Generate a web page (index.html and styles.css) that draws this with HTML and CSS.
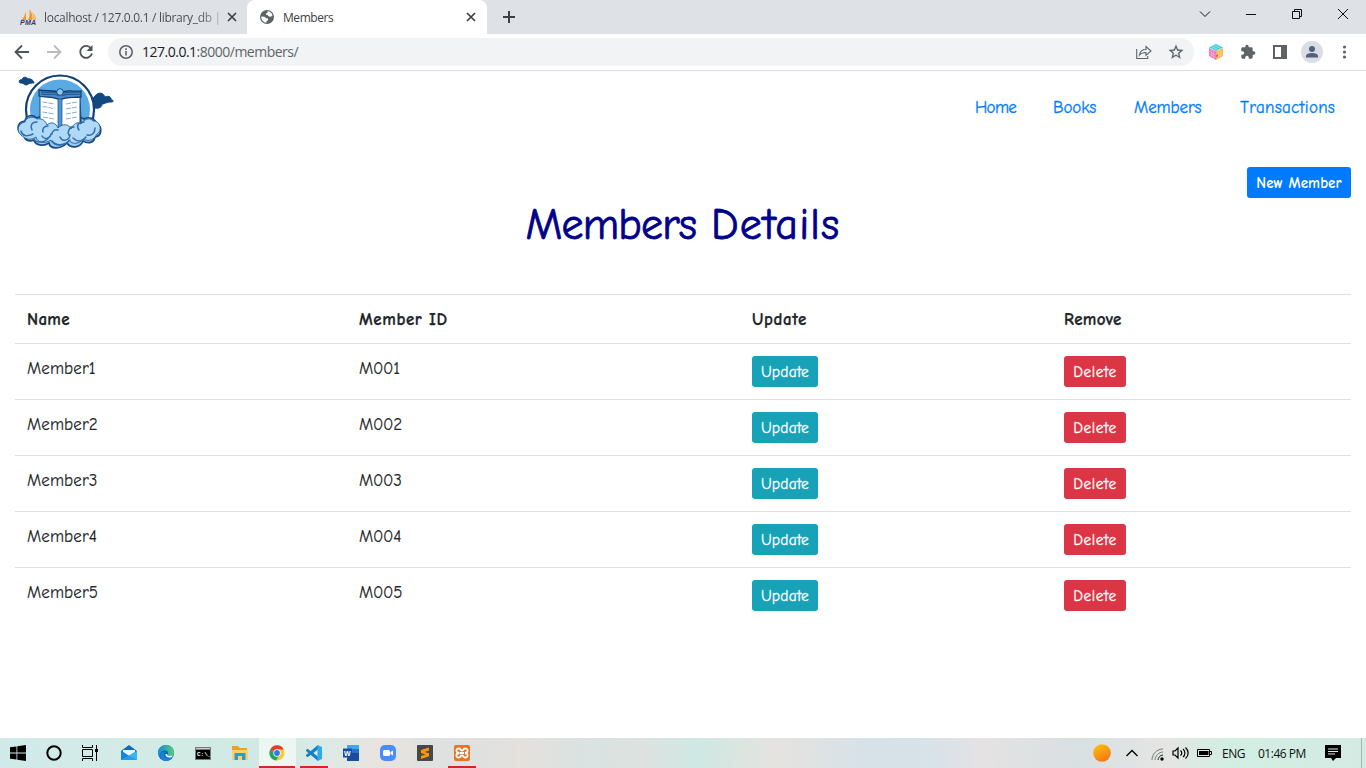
FILE: index.html
```html
<!DOCTYPE html>
<html lang="en">
<head>
<meta charset="utf-8">
<title>Members</title>
<link rel="stylesheet" href="styles.css">
</head>
<body>
<div class="screen">
  <header class="tabs">
    <div class="tab">
      <svg class="pma" width="17" height="17" viewBox="0 0 17 17"><path d="M6 2v9H1C4 9 5 6 6 2zM9 0c3 3 4 7 3 11H8c2-4 2-8 1-11z" fill="#f79428"/><path d="M12 3c3 2 4 5 4 8h-4c1-3 1-5 0-8z" fill="#f9b868"/><text x="0" y="16" textLength="16" class="pma-text">PMA</text></svg>
      <span class="tab-title first">localhost / 127.0.0.1 / library_db |</span>
      <svg class="close" width="10" height="10" viewBox="0 0 10 10"><path d="M1 1l8 8M9 1L1 9"/></svg>
    </div>
    <div class="tab active">
      <svg class="globe" width="14" height="14" viewBox="0 0 14 14"><circle cx="7" cy="7" r="7" fill="#5f6368"/><path d="M1.300 6.500l3.200.2 1.700 1.500 1.800.3v1.700L6.500 11v1.700C3.500 12.500 1.200 10 1.300 6.500zM7.500 1.300c2.500 0 4.500 1.700 5 4l-1.500 1.500-2-.2-1.500-1.500-1.500-.3V3.500l1.500-.7z" fill="#fff"/></svg>
      <span class="tab-title">Members</span>
      <svg class="close" width="10" height="10" viewBox="0 0 10 10"><path d="M1 1l8 8M9 1L1 9"/></svg>
    </div>
    <svg class="plus" width="12" height="12" viewBox="0 0 12 12"><path d="M6 0v12M0 6h12"/></svg>
    <div class="window-controls">
      <svg width="12" height="12" viewBox="0 0 12 12"><path d="M1 3.500l5 5 5-5"/></svg>
      <svg width="12" height="12" viewBox="0 0 12 12"><path d="M1 6.500h10"/></svg>
      <svg width="12" height="12" viewBox="0 0 12 12"><path d="M1.500 3.500h7v7h-7zM3.500 3V1.500h7v7H9"/></svg>
      <svg width="12" height="12" viewBox="0 0 12 12"><path d="M1 1l10 10M11 1L1 11"/></svg>
    </div>
  </header>

  <div class="toolbar">
    <svg class="nav-icon" width="16" height="16" viewBox="0 0 16 16"><path d="M15 8H2M8 1.500L1.500 8 8 14.500"/></svg>
    <svg class="nav-icon off" width="16" height="16" viewBox="0 0 16 16"><path d="M1 8h13M8 1.500L14.500 8 8 14.500"/></svg>
    <svg class="nav-icon" width="16" height="16" viewBox="0 0 16 16"><path d="M13.200 4.500A6 6 0 1 0 14 9.500"/><path d="M14.500 1v6h-6z" class="solid"/></svg>
    <div class="address">
      <svg width="14" height="14" viewBox="0 0 14 14"><circle cx="7" cy="7" r="6.200" class="line"/><path d="M7 6v4.500M7 3.300v1.600" class="line"/></svg>
      <span class="url"><b>127.0.0.1</b>:8000/members/</span>
      <svg class="share" width="16" height="16" viewBox="0 0 16 16"><path class="thin" d="M.7 5v9.500h11V12M3.500 11C4 7 6.500 5.500 10 5.500V2.500L15 7l-5 4.300V8.500c-3 0-5 .5-6.500 2.500z"/></svg>
      <svg class="star" width="16" height="16" viewBox="1 1 22 22"><path fill="#5f6368" d="M22 9.240l-7.190-.62L12 2 9.190 8.630 2 9.240l5.460 4.730L5.820 21 12 17.270 18.180 21l-1.630-7.030zM12 15.400l-3.760 2.270 1-4.280-3.320-2.880 4.380-.38L12 6.100l1.710 4.040 4.380.38-3.320 2.880 1 4.280z" stroke="#5f6368" stroke-width=".3"/></svg>
    </div>
    <div class="extensions">
      <svg width="16" height="16" viewBox="0 0 16 16"><path d="M8 0l7 3.500L8 7 1 3.500z" fill="#35c9dc"/><path d="M1 4l7 3.500V16l-7-4z" fill="#ee72b8"/><path d="M15 4L8 7.500V16l7-4z" fill="#f7b441"/><path d="M3.300 2.300l7 3.600M5.700 1.200l7 3.500M12.700 2.300l-7 3.500M10.400 1.200l-7 3.500M3.300 5v8M5.700 6v9M10.300 6v9M12.700 5v8M1 7l7 4 7-4M1 9.700l7 3.800 7-3.800" stroke="#fff" stroke-width=".4" fill="none" opacity=".8"/><path d="M8 11l2-1v2.500l-2 1z" fill="#ef5f72"/></svg>
      <svg width="16" height="16" viewBox="0 0 24 24"><path fill="#5f6368" d="M20.500 11H19V7c0-1.100-.9-2-2-2h-4V3.500a2.500 2.500 0 0 0-5 0V5H4c-1.100 0-2 .9-2 2v3.800h1.500a2.700 2.700 0 0 1 0 5.400H2V20c0 1.100.9 2 2 2h3.800v-1.500a2.700 2.700 0 0 1 5.400 0V22H17c1.100 0 2-.9 2-2v-4h1.500a2.500 2.500 0 0 0 0-5z"/></svg>
      <svg width="16" height="16" viewBox="0 0 16 16"><path d="M2 2h12v12H2zM10 2v12" stroke="#5f6368" stroke-width="2" fill="none"/><path d="M10 2h4v12h-4z" fill="#5f6368"/></svg>
      <svg width="22" height="22" viewBox="0 0 22 22"><circle cx="11" cy="11" r="11" fill="#dadde5"/><circle cx="11" cy="8" r="3" fill="#51607b"/><path d="M5 16.500v-1.500c0-2 3-3 6-3s6 1 6 3v1.500z" fill="#51607b"/></svg>
      <svg width="16" height="16" viewBox="0 0 16 16" fill="#5f6368"><circle cx="8.500" cy="3" r="1.600"/><circle cx="8.500" cy="8" r="1.600"/><circle cx="8.500" cy="13" r="1.600"/></svg>
    </div>
  </div>

  <main class="page">
    <div class="site-header">
      <svg class="logo" width="100" height="82" viewBox="0 1 100 82">
        <g fill="#11487f"><path d="M5 13c-2-2 0-4 2-3 0-3 4-4 6-1 3-1 6 2 6 4-5 0-5 1-8 2-2 0-2-2-6-2zM74 31c1-2 4-2 6-5 3-4 8-4 10 1 4-2 7 1 6 3 3 0 3 2 0 2-5 0-6 2-9 2 0 5-7 5-9 3-2 2-6 1-5-2z" stroke="#11487f"/></g>
        <circle cx="45" cy="39.500" r="34" fill="#fff" stroke="#123f75" stroke-width="2.200"/>
        <circle cx="45" cy="39.500" r="30" fill="#5aaae4"/>
        <path d="M9 65c-8-2-8-13 1-14 1-6 8-7 12-3 5-3 11 1 12 4h22c3-5 9-6 13-3 5-3 12 0 12 5 7 2 6 12-1 13-1 6-7 7-12 4-3 7-12 8-16 2-7 7-17 6-18 0-6 4-14 2-15-3-5 2-10 0-10-5z" fill="#9accf2" stroke="#164b88" stroke-width="1.700"/>
        <path d="M25 21l40 1 2 35-22 2-20-4z" fill="#1b4d83"/>
        <path d="M25 26c7 1 13 0 20 3 7-3 13-2 20-2v29c-7 0-14 2-20 4-6-4-13-4-20-5z" fill="#fff" stroke="#1b5188"/>
        <path d="M24 20c9 2 14-1 21 3 7-4 13-1 21-2v6c-8 1-14-1-21 3-7-4-14-2-21-4z" fill="#4c8bc7" stroke="#143e70" stroke-width="1.300"/>
        <path d="M26 24c8 1 14-1 18 2M47 26c5-3 12-1 18-2M26 22c8 1 13-1 18 2M47 24c5-3 12-1 18-2" fill="none" stroke="#123f75" stroke-width=".8"/>
        <path d="M43 29h4v30h-4z" fill="#4c95d4" stroke="#194b83" stroke-width=".7"/>
        <circle cx="45" cy="22" r="3.300" fill="#92c8f0" stroke="#194b83"/>
        <path d="M27.500 32l12 2M27.500 37c4-1 7 1 12 2M27.500 42l12 2M28 47l11 2M51 34l11-2M51 39l11-2M51 44l11-2M51 49l11-2" stroke="#72a7ce" stroke-width=".9" stroke-dasharray="5 1" fill="none"/>
        <path d="M6 65c-5-4-3-12 4-13 1-5 8-6 12-3 5-1 9 2 10 6 4-4 9-2 11 3 5-5 11-4 13 1 2-5 7-8 10-5 3-5 9-7 12-3 7-1 10 10 4 13-3 6-8 8-14 5-5 7-13 4-14 1-5 8-17 6-18 0-6 4-14 3-15-3-6 4-11 2-15-2z" fill="#afd9f6" stroke="#164b88" stroke-width=".8"/>
        <path d="M6 61c1 5 6 6 12 3M19 69c2 4 9 4 14 0M37 71c4 5 12 5 18-1M58 68c5 5 10 3 13-1M80 58c0 5-3 8-8 7M22 52c-6 0-7 5-5 8M33 56c-4 0-6 3-5 6M43 60c-3-1-6 1-6 4M59 57c-5 0-7 5-5 8M69 52c-6 0-8 4-5 8M27 66c2 4 8 3 9-2M45 67c2 5 9 4 10-2" stroke="#2c70ac" stroke-width="1.500" fill="none" stroke-linecap="round"/>
      </svg>
      <nav class="links">
        <a class="home">Home</a><a class="books">Books</a><a class="members">Members</a><a class="transactions">Transactions</a>
      </nav>
    </div>
    <div class="actions"><button class="btn new">New Member</button></div>
    <h1><span class="narrow">Members</span> <span class="spaced">Details</span></h1>
    <table>
      <colgroup><col class="c1"><col class="c2"><col class="c3"><col class="c4"></colgroup>
      <tr><th>Name</th><th class="wide">Member ID</th><th class="wide">Update</th><th>Remove</th></tr>
      <tr><td class="name">Member1</td><td class="code">M001</td><td class="action"><button class="btn update">Update</button></td><td class="action"><button class="btn delete">Delete</button></td></tr>
      <tr><td class="name">Member2</td><td class="code">M002</td><td class="action"><button class="btn update">Update</button></td><td class="action"><button class="btn delete">Delete</button></td></tr>
      <tr><td class="name">Member3</td><td class="code">M003</td><td class="action"><button class="btn update">Update</button></td><td class="action"><button class="btn delete">Delete</button></td></tr>
      <tr><td class="name">Member4</td><td class="code">M004</td><td class="action"><button class="btn update">Update</button></td><td class="action"><button class="btn delete">Delete</button></td></tr>
      <tr><td class="name">Member5</td><td class="code">M005</td><td class="action"><button class="btn update">Update</button></td><td class="action"><button class="btn delete">Delete</button></td></tr>
    </table>
  </main>

  <footer class="taskbar">
    <div class="system-apps">
      <span class="cell"><svg width="16" height="16" viewBox="0 0 16 16"><path d="M0 2.300l6.500-.9v6.200H0zM7.300 1.200L16 0v7.600H7.300zM0 8.400h6.500v6.200L0 13.700zM7.300 8.400H16V16l-8.700-1.200z"/></svg></span>
      <span class="cell"><svg width="16" height="16" viewBox="0 0 16 16"><circle cx="8" cy="8" r="6.700" fill="none" stroke="#000" stroke-width="2"/></svg></span>
      <span class="cell"><svg width="16" height="16" viewBox="0 0 16 16"><path d="M.5 0v2.500h10V0M.5 16v-2.500h10V16M.5 4.500h10v7H.5zM14.500 0v16" fill="none" stroke="#000"/><path d="M13 4h3v3h-3z"/></svg></span>
    </div>
    <div class="apps">
      <span class="cell"><svg width="16" height="16" viewBox="0 0 16 16"><path d="M0 6l8-6 8 6v9H0z" fill="#1469b8"/><path d="M2 5h12v2L8 11 2 7z" fill="#e9f5fb"/><path d="M0 6l8 5-8 4z" fill="#1683dc"/><path d="M16 6v9H0z" fill="#31b8f2"/><path d="M0 15h16L8 10.500z" fill="#239de8"/></svg></span>
      <span class="cell"><svg width="16" height="16" viewBox="0 0 16 16"><defs><linearGradient id="edge"><stop stop-color="#168bdc"/><stop offset="1" stop-color="#51cf73"/></linearGradient></defs><circle cx="8" cy="8" r="8" fill="#0d67b7"/><path d="M0 8C0 3 4 0 8 0c5 0 8 4 8 7.500 0 3-3 4-6 3-1-.4-.8-1 0-2 .6-2-1-3-3-3C4 5.500 2 7 2 11 .5 10 0 9 0 8z" fill="url(#edge)"/><path d="M6 9c0 4 4 6 8 3.500C12 17 5 17 3 13c-2-4 1-7 4-6-1 .5-1 1-1 2z" fill="#1a83d8"/><path d="M9 9c-.4 1.500 2.500 2.600 6 1.200L14 12c-3 1.700-7 0-6.500-3z" fill="#e1f3ed"/></svg></span>
      <span class="cell"><svg width="16" height="13" viewBox="0 0 16 13"><path d="M0 0h16v13H0z" fill="#777"/><path d="M1 3h14v9H1z"/><path d="M1 1h14v1H1z" fill="#c9cdd0"/><text x="2" y="9" class="cmd">C:\_</text></svg></span>
      <span class="cell"><svg width="16" height="16" viewBox="0 0 16 16"><path d="M0 1h6l2 2h7v11H0z" fill="#e7a321"/><path d="M0 5h16v10H0z" fill="#ffd163"/><path d="M2.500 15V8h11v7H10v-4H6v4z" fill="#3296de"/></svg></span>
      <span class="cell active-app"><svg width="16" height="16" viewBox="0 0 16 16"><circle cx="8" cy="8" r="7.500" fill="#f9ca36"/><path d="M8 8L1.400 4.300A7.500 7.500 0 0 0 7 15.500L11 9z" fill="#22a461"/><path d="M8 8L1.400 4.300A7.500 7.500 0 0 1 14.700 4.500H8z" fill="#e33c32"/><circle cx="8" cy="8" r="3.700" fill="#fff"/><circle cx="8" cy="8" r="2.900" fill="#3478e8"/></svg></span>
      <span class="cell running"><svg width="16" height="16" viewBox="0 0 16 16"><path d="M0 5l1.500-1.200L12 11.500V16L0 6z" fill="#1680c7"/><path d="M0 11l1.500 1.200L12 4.500V0L0 10z" fill="#1680c7"/><path d="M11.500 0L16 2v12l-4.500 2z" fill="#30a8ef"/></svg></span>
      <span class="cell"><svg width="16" height="16" viewBox="0 0 16 16"><path d="M4 0h12v16H4z" fill="#2b72c9"/><path d="M4 0h12v4H4z" fill="#48a4ed"/><path d="M4 8h12v8H4z" fill="#184e9d"/><path d="M0 3.500h9v9H0z" fill="#194e9e"/><text x="1" y="11" class="word">W</text></svg></span>
      <span class="cell"><svg width="16" height="16" viewBox="0 0 16 16"><rect width="16" height="16" rx="5" fill="#4a8cff"/><rect x="3" y="5" width="7" height="6" rx="1.500" fill="#fff"/><path d="M10.500 7L13 5.500v5L10.500 9z" fill="#fff"/></svg></span>
      <span class="cell"><svg width="16" height="16" viewBox="0 0 16 16"><rect width="16" height="16" rx="1" fill="#484848"/><path d="M12 2.500v3L7.500 7 12 8.300v3L4 14v-3l4.500-1.500L4 8V5z" fill="#ff9800"/></svg></span>
      <span class="cell running"><svg width="16" height="16" viewBox="0 0 16 16"><rect width="16" height="16" rx="2" fill="#e77325"/><path d="M5.500 8C1 7.500 2 3 5 3.500c2 0 1 2 3 2s1-2 3-2c3-.5 4 4 0 4.500 4 .5 3 5 0 4.500-2 0-1-2-3-2s-1 2-3 2c-3 .5-4-4 .5-4.500zM6 8h4" fill="none" stroke="#fff" stroke-width="1.800"/></svg></span>
    </div>
    <div class="tray">
      <svg class="weather" width="18" height="18" viewBox="0 0 18 18"><defs><linearGradient id="sun" x2=".5" y2="1"><stop stop-color="#ffc40c"/><stop offset="1" stop-color="#f47b16"/></linearGradient></defs><circle cx="9" cy="9" r="8.800" fill="url(#sun)"/></svg>
      <svg class="chevron" width="12" height="8" viewBox="0 0 12 8"><path d="M.5 7L6 1.500 11.500 7" fill="none" stroke="#000" stroke-width="1.300"/></svg>
      <svg class="wifi" width="13" height="13" viewBox="0 0 13 13"><g fill="none" stroke="#747b7b"><path d="M1 12C1 6 6 1 12 1M4 12c0-4 4-8 8-8"/><path d="M7 12c0-2 2-5 5-5" stroke="#222"/></g><circle cx="11" cy="11" r="1.700"/></svg>
      <svg class="volume" width="17" height="14" viewBox="0 0 17 14"><path d="M1 5h2l3-3v10L3 9H1zM8.500 4.500c1.500 1.500 1.500 3.500 0 5M11 3c2.500 2 2.500 6 0 8M13.500 1.500c3.500 3 3.500 8 0 11" fill="none" stroke="#000" stroke-width="1.200"/></svg>
      <svg class="battery" width="15" height="8" viewBox="0 0 15 8"><path d="M.5.500h12v7H.5zM13 2.500h1.500v3H13" fill="none" stroke="#000"/><path d="M2 2h9.500v4H2z"/></svg>
      <span class="language">ENG</span><span class="clock">01:46 PM</span>
      <svg class="notice" width="16" height="16" viewBox="0 0 16 16"><path d="M0 0h16v13h-5l-3 3-2-3H0z"/><path d="M3 4h10M3 6.500h10M3 9h7" stroke="#d6eee6"/></svg>
      <i class="desktop-edge"></i>
    </div>
  </footer>
</div>
</body>
</html>
```
FILE: styles.css
```css
* { box-sizing: border-box; }
body { margin: 0; }
.screen {
  width: 1366px; height: 768px; display: flex; flex-direction: column;
  overflow: hidden; background: #fff; color: #212529;
  font: 12px "Open Sans", sans-serif;
}
svg { flex: none; }
.tabs { height: 34px; display: flex; align-items: center; background: #dee1e6; flex: none; }
.tab { height: 34px; width: 247px; padding: 0 10px 0 20px; display: flex; align-items: center; color: #45484c; }
.tab.active { width: 240px; padding: 0 11px 0 13px; border-radius: 8px 8px 0 0; background: #fff; color: #3c4043; }
.tab-title { margin-left: 9px; font-size: 12px; white-space: nowrap; }
.tab.active .tab-title { letter-spacing: -.45px; }
.tab-title.first { margin-left: 7px; letter-spacing: -.3px; background: linear-gradient(90deg, #45484c 86%, #b0b3b7); background-clip: text; color: transparent; }
.pma-text { font: italic bold 7px "Liberation Sans", sans-serif; fill: #343765; }
.close { margin-left: auto; fill: none; stroke: #3c4043; stroke-width: 1.7; }
.plus { margin-left: 16px; stroke: #3c4043; stroke-width: 2; }
.window-controls { margin: -6px 17px 0 auto; display: flex; gap: 34px; fill: none; stroke: #111; }
.toolbar { height: 37px; flex: none; display: flex; align-items: center; padding: 0 14px; border-bottom: 1px solid #dadce0; }
.nav-icon { margin-right: 16px; fill: none; stroke: #505357; stroke-width: 1.8; }
.nav-icon.off { stroke: #b9bbbd; }
.nav-icon .solid { fill: #505357; stroke: none; }
.nav-icon:nth-of-type(3) { margin-right: 14px; }
.address { width: 1086px; height: 28px; padding: 0 10px 0 11px; border-radius: 14px; background: #f1f3f4; display: flex; align-items: center; }
.line { fill: none; stroke: #5f6368; stroke-width: 1.6; }
.thin { fill: none; stroke: #5f6368; stroke-width: 1.1; }
.url { margin-left: 9px; margin-top: -1px; font-size: 14px; letter-spacing: -.5px; color: #606468; }
.url b { color: #202124; font-weight: 400; }
.share { margin-left: auto; margin-right: 16px; }
.extensions { margin-left: 14px; display: flex; gap: 16px; align-items: center; }
.extensions svg:nth-child(4) { margin: 0 -3px; }
.page {
  height: 667px; flex: none; padding: 0 15px;
  font-family: "Comic Sans MS", "Comic Neue", "Open Sans", sans-serif; font-size: 17px;
}
.site-header { height: 82px; display: flex; justify-content: space-between; }
.links { display: flex; padding: 25px 15px 0 0; gap: 37px; line-height: 24px; color: #007bff; -webkit-text-stroke: .3px; }
.links .home { width: 41px; letter-spacing: -.7px; }
.links .books { width: 44px; letter-spacing: -.1px; }
.links .members { width: 69px; letter-spacing: -.1px; }
.links .transactions { width: 96px; letter-spacing: .3px; }
.actions { height: 45px; padding-top: 14px; display: flex; justify-content: flex-end; }
.btn { display: block; height: 31px; padding: 1px 0 0; border: 0; border-radius: 3px; color: #fff; font-family: inherit; font-size: 15.5px; line-height: 30px; white-space: nowrap; -webkit-text-stroke: .3px; }
.new { width: 104px; background: #007bff; font-size: 15px; letter-spacing: .1px; font-weight: 600; -webkit-text-stroke: 0; }
h1 { margin: 0; height: 96px; font-size: 44px; line-height: 53px; font-weight: 400; text-align: center; color: #00008b; -webkit-text-stroke: .8px; }
.narrow { letter-spacing: -.85px; }
.spaced { letter-spacing: 1.1px; }
table { width: 1336px; table-layout: fixed; border-collapse: separate; border-spacing: 0; }
.c1 { width: 332px; } .c2 { width: 393px; } .c3 { width: 312px; } .c4 { width: 299px; }
th, td { padding: 13px 12px 11px; text-align: left; vertical-align: top; line-height: 24px; border-top: 1px solid #dee2e6; }
th { height: 49px; font-weight: 700; letter-spacing: .3px; -webkit-text-stroke: .25px; }
th.wide { letter-spacing: .6px; }
td { height: 56px; -webkit-text-stroke: .15px; }
td.action { padding: 12px; }
.name { letter-spacing: .1px; }
.code { letter-spacing: -.25px; }
.update { width: 66px; background: #17a2b8; letter-spacing: .2px; }
.delete { width: 62px; background: #dc3545; letter-spacing: .5px; }
.taskbar {
  height: 30px; flex: none; display: flex; color: #111;
  background: linear-gradient(90deg, #d0eaea 0%, #d4ebe5 10%, #cfeae2 20%, #dceae5 24%, #e9e3de 28%, #dfe2e0 31%, #dfe1df 35%, #e5e1dc 38%, #d9e3e2 43%, #dde2e0 47%, #cfe8e3 51%, #e5e3df 57%, #d7e2e8 63%, #d8e2e9 68%, #e5e2e3 72%, #d8e0e2 79%, #e5e5e3 85%, #d2eee3 90%, #d4ebe3 100%);
}
.system-apps, .apps, .tray { display: flex; align-items: center; }
.cell { height: 30px; width: 37px; display: flex; align-items: center; justify-content: center; }
.system-apps .cell { width: 36px; }
.apps { margin-left: 2.5px; }
.active-app { background: linear-gradient(#cf2828, #cf2828) center bottom / 36px 2px no-repeat, #ecf7f4; }
.running { background: linear-gradient(#cf2828, #cf2828) center bottom / 28px 2px no-repeat; }
.cmd { font: bold 6px "Liberation Mono", monospace; fill: #fff; }
.word { font: bold 7px "Liberation Sans", sans-serif; fill: #fff; }
.tray { margin-left: auto; }
.chevron { margin-left: 15px; }
.wifi { margin-left: 13px; margin-top: 2px; }
.volume { margin-left: 8px; }
.battery { margin-left: 8px; }
.language { margin-left: 10px; width: 24px; letter-spacing: -.5px; }
.clock { margin-left: 12px; width: 49px; letter-spacing: -.5px; white-space: nowrap; }
.notice { margin-left: 18px; }
.desktop-edge { height: 30px; margin-left: 20px; margin-right: 4px; border-left: 1px solid #a7b9b5; }
```
